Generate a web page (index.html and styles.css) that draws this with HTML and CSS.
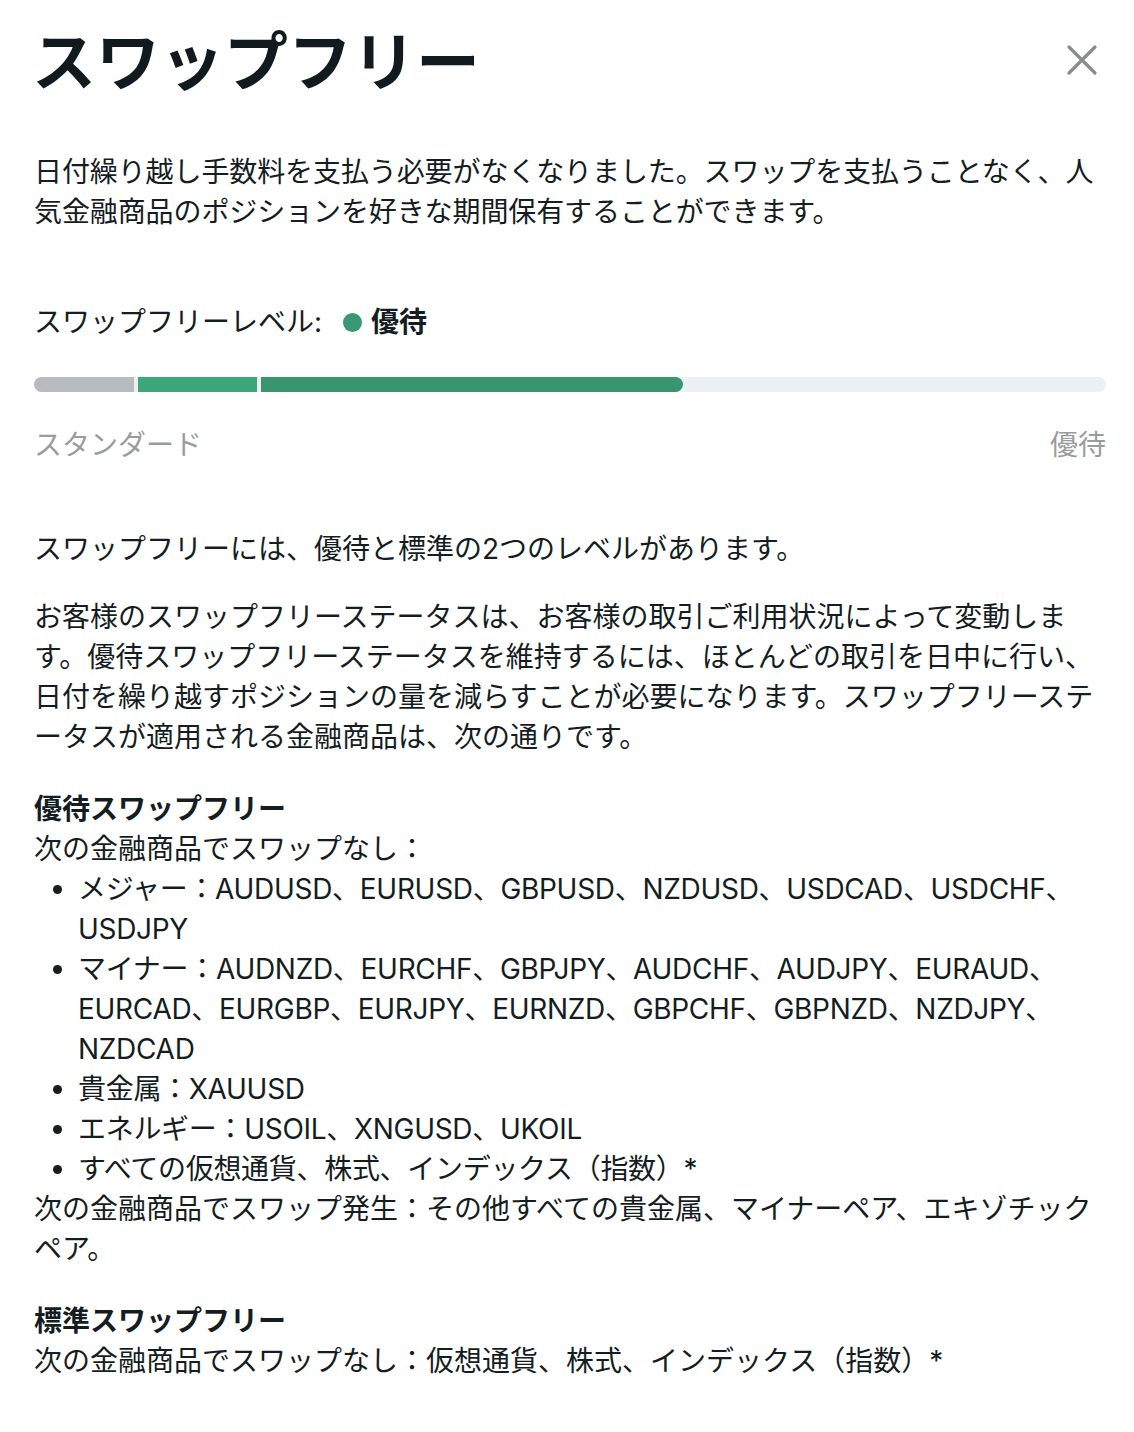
FILE: index.html
```html
<!DOCTYPE html>
<html lang="ja">

<head>
  <meta charset="UTF-8">
  <meta name="viewport" content="width=device-width, initial-scale=1.0">
  <title>スワップフリー</title>
  <link rel="stylesheet" href="styles.css">
</head>

<body>
  <div class="modal">
    <header class="modal-header">
      <h1>スワップフリー</h1>
      <button class="close" aria-label="閉じる">
        <svg width="32" height="32" viewBox="0 0 32 32">
          <path d="M3 3 L29 29 M29 3 L3 29" stroke="#898c8f" stroke-width="3.2" stroke-linecap="round" fill="none" />
        </svg>
      </button>
    </header>

    <p class="intro">日付繰り越し手数料を支払う必要がなくなりました。スワップを支払うことなく、人気金融商品のポジションを好きな期間保有することができます。</p>

    <div class="level">
      <span>スワップフリーレベル:</span>
      <span class="dot"></span>
      <strong>優待</strong>
    </div>

    <div class="progress">
      <div class="seg seg-gray"></div>
      <div class="seg seg-light"></div>
      <div class="seg seg-dark"></div>
    </div>
    <div class="progress-labels">
      <span>スタンダード</span>
      <span>優待</span>
    </div>

    <p class="lead">スワップフリーには、優待と標準の2つのレベルがあります。</p>
    <p class="text">お客様のスワップフリーステータスは、お客様の取引ご利用状況によって変動します。優待スワップフリーステータスを維持するには、ほとんどの取引を日中に行い、日付を繰り越すポジションの量を減らすことが必要になります。スワップフリーステータスが適用される金融商品は、次の通りです。</p>

    <section class="tier">
      <h2>優待スワップフリー</h2>
      <div>次の金融商品でスワップなし：</div>
      <ul>
        <li>メジャー：AUDUSD、EURUSD、GBPUSD、NZDUSD、USDCAD、USDCHF、USDJPY</li>
        <li>マイナー：AUDNZD、EURCHF、GBPJPY、AUDCHF、AUDJPY、EURAUD、EURCAD、EURGBP、EURJPY、EURNZD、GBPCHF、GBPNZD、NZDJPY、NZDCAD</li>
        <li>貴金属：XAUUSD</li>
        <li>エネルギー：USOIL、XNGUSD、UKOIL</li>
        <li>すべての仮想通貨、株式、インデックス（指数）*</li>
      </ul>
      <div>次の金融商品でスワップ発生：その他すべての貴金属、マイナーペア、エキゾチックペア。</div>
    </section>

    <section class="tier">
      <h2>標準スワップフリー</h2>
      <div>次の金融商品でスワップなし：仮想通貨、株式、インデックス（指数）*</div>
    </section>
  </div>
</body>

</html>
```

FILE: styles.css
```css
body {
  margin: 0;
  background-color: #fff;
  color: #141d22;
  font-family: Inter, "Noto Sans CJK JP", sans-serif;
  font-size: 28px;
  line-height: 40px;
}

.modal {
  padding: 0 28px 40px 34px;
}

/* header with title and close button */
.modal-header {
  display: flex;
  justify-content: space-between;
  align-items: center;
  height: 114px;
}

.modal-header h1 {
  margin: 0 0 0 -2px;
  font-family: "Noto Sans CJK JP", sans-serif;
  font-size: 64px;
  font-weight: 700;
  line-height: 64px;
  color: #111a1f;
}

.close {
  border: none;
  background: none;
  padding: 0;
  margin: 6px 8px 0 0;
  display: flex;
}

p {
  margin: 0;
}

.intro {
  margin-top: 38px;
  letter-spacing: -0.1px;
}

/* level row */
.level {
  display: flex;
  align-items: center;
  margin-top: 70px;
}

.dot {
  width: 19px;
  height: 19px;
  border-radius: 50%;
  background-color: #3a9873;
  margin: 0 9px 0 21px;
}

.level strong {
  font-weight: 700;
}

/* progress bar */
.progress {
  display: flex;
  gap: 4px;
  height: 15px;
  margin-top: 35px;
  background-color: #eeeff0;
  border-radius: 8px;
}

.seg-gray {
  width: 100px;
  background-color: #b9bcbf;
  border-radius: 8px 0 0 8px;
}

.seg-light {
  width: 119px;
  background-color: #3ca67d;
}

.seg-dark {
  width: 422px;
  background-color: #389570;
  border-radius: 0 8px 8px 0;
}

.progress-labels {
  display: flex;
  justify-content: space-between;
  margin-top: 33px;
  color: #999c9e;
}

.lead {
  margin-top: 64px;
}

.text {
  margin-top: 28px;
}

/* tiers */
.tier {
  margin-top: 32px;
}

.tier h2 {
  margin: 0;
  font-size: 28px;
  font-weight: 700;
  line-height: 40px;
}

.tier ul {
  margin: 0;
  padding-left: 44px;
  letter-spacing: -0.3px;
}
```
